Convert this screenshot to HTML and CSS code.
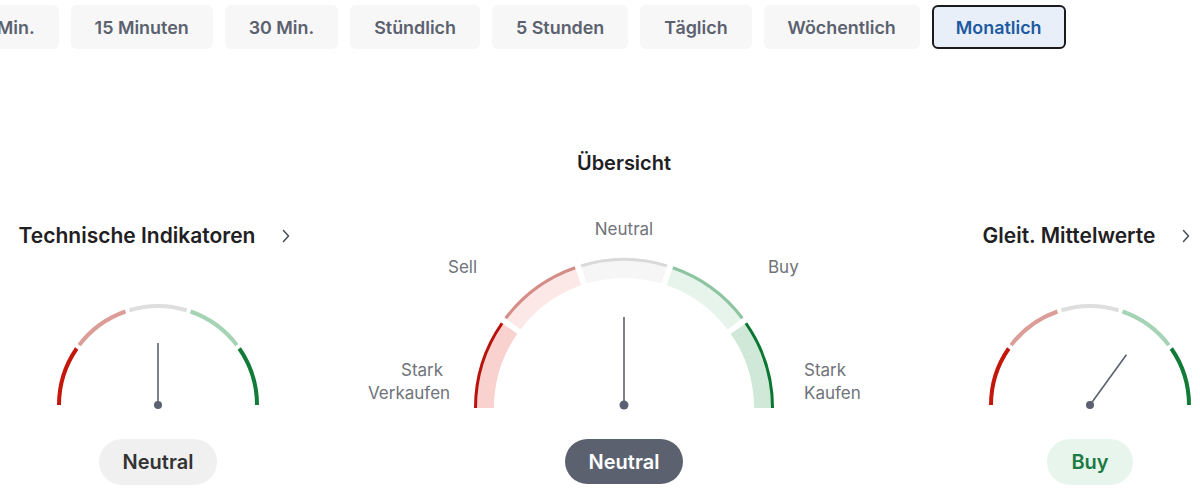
FILE: index.html
```html
<!DOCTYPE html>
<html lang="de">
<head>
    <meta charset="UTF-8">
    <meta name="viewport" content="width=device-width, initial-scale=1.0">
    <title>Technische Analyse</title>
    <link rel="stylesheet" href="styles.css">
</head>
<body>

<nav class="periods">
    <button class="period">5 Min.</button>
    <button class="period">15 Minuten</button>
    <button class="period">30 Min.</button>
    <button class="period">Stündlich</button>
    <button class="period">5 Stunden</button>
    <button class="period">Täglich</button>
    <button class="period">Wöchentlich</button>
    <button class="period active">Monatlich</button>
</nav>

<main class="summary">
    <section class="panel side">
        <div class="panel-head">
            <h2>Technische Indikatoren</h2>
            <svg class="chevron" width="8" height="14" viewBox="0 0 8 14"><path d="M1.5 1.5 L6.5 7 L1.5 12.5" /></svg>
        </div>
        <svg class="gauge-small" width="220" height="110" viewBox="0 0 220 110">
            <path class="s-ss" d="M11 104 A99 99 0 0 1 28.71 47.5" />
            <path class="s-s" d="M31.15 44.14 A99 99 0 0 1 77.44 10.5" />
            <path class="s-n" d="M81.39 9.23 A99 99 0 0 1 138.61 9.23" />
            <path class="s-b" d="M142.56 10.5 A99 99 0 0 1 188.85 44.14" />
            <path class="s-sb" d="M191.29 47.5 A99 99 0 0 1 209 104" />
            <line class="needle" x1="110" y1="104" x2="110" y2="42" />
            <circle class="hub" cx="110" cy="104" r="4" />
        </svg>
        <span class="pill pill-neutral">Neutral</span>
    </section>

    <section class="panel main">
        <h2>Übersicht</h2>
        <svg class="gauge-big" width="520" height="205" viewBox="0 0 520 205">
            <text x="260" y="25" text-anchor="middle">Neutral</text>
            <text x="84" y="63">Sell</text>
            <text x="404" y="63">Buy</text>
            <text x="37" y="166">Stark</text>
            <text x="4" y="189">Verkaufen</text>
            <text x="440" y="166">Stark</text>
            <text x="440" y="189">Kaufen</text>

            <path class="b-ss" d="M120 198 A140 140 0 0 1 145.05 118.1" />
            <path class="b-s" d="M148.49 113.36 A140 140 0 0 1 213.95 65.78" />
            <path class="b-n" d="M219.54 63.98 A140 140 0 0 1 300.46 63.98" />
            <path class="b-b" d="M306.05 65.78 A140 140 0 0 1 371.51 113.36" />
            <path class="b-sb" d="M374.95 118.1 A140 140 0 0 1 400 198" />

            <path class="l-ss" d="M111.5 198 A148.5 148.5 0 0 1 138.07 113.25" />
            <path class="l-s" d="M141.72 108.22 A148.5 148.5 0 0 1 211.16 57.76" />
            <path class="l-n" d="M217.08 55.84 A148.5 148.5 0 0 1 302.92 55.84" />
            <path class="l-b" d="M308.84 57.76 A148.5 148.5 0 0 1 378.28 108.22" />
            <path class="l-sb" d="M381.93 113.25 A148.5 148.5 0 0 1 408.5 198" />

            <line class="needle" x1="260" y1="195" x2="260" y2="107" />
            <circle class="hub" cx="260" cy="195" r="4.5" />
        </svg>
        <span class="pill pill-dark">Neutral</span>
    </section>

    <section class="panel side">
        <div class="panel-head">
            <h2>Gleit. Mittelwerte</h2>
            <svg class="chevron" width="8" height="14" viewBox="0 0 8 14"><path d="M1.5 1.5 L6.5 7 L1.5 12.5" /></svg>
        </div>
        <svg class="gauge-small" width="220" height="110" viewBox="0 0 220 110">
            <path class="s-ss" d="M11 104 A99 99 0 0 1 28.71 47.5" />
            <path class="s-s" d="M31.15 44.14 A99 99 0 0 1 77.44 10.5" />
            <path class="s-n" d="M81.39 9.23 A99 99 0 0 1 138.61 9.23" />
            <path class="s-b" d="M142.56 10.5 A99 99 0 0 1 188.85 44.14" />
            <path class="s-sb" d="M191.29 47.5 A99 99 0 0 1 209 104" />
            <line class="needle" x1="110" y1="104" x2="146.4" y2="53.8" />
            <circle class="hub" cx="110" cy="104" r="4" />
        </svg>
        <span class="pill pill-buy">Buy</span>
    </section>
</main>

</body>
</html>
```

FILE: styles.css
```css
body {
    margin: 0;
    background-color: #ffffff;
    font-family: 'Inter', 'Roboto', sans-serif;
    overflow: hidden;
}

.periods {
    display: flex;
    gap: 12px;
    margin-left: -43px;
    padding-top: 5px;
}

.period {
    flex: none;
    height: 44px;
    padding: 0 22px;
    border: 2px solid transparent;
    border-radius: 6px;
    background-color: #f7f7f8;
    color: #5b616e;
    font-family: inherit;
    font-size: 17.9px;
    font-weight: 600;
    cursor: pointer;
}

.period.active {
    background-color: #e8eff9;
    border-color: #1b1b1b;
    color: #1e5aa0;
}

.summary {
    display: grid;
    grid-template-columns: 276px 1fr 276px;
    width: 1208px;
    padding: 102px 0 0 20px;
}

.panel {
    display: flex;
    flex-direction: column;
    align-items: center;
}

.panel h2 {
    margin: 0;
    font-size: 20px;
    line-height: 24px;
    font-weight: 600;
    color: #1f2023;
    white-space: nowrap;
}

.side {
    padding-top: 73px;
}

.side h2 {
    font-size: 21px;
}

.panel-head {
    display: flex;
    align-items: center;
    gap: 27px;
    padding-right: 7px;
}

.chevron {
    flex: none;
}

.chevron path {
    fill: none;
    stroke: #4a4d55;
    stroke-width: 1.5;
    stroke-linecap: round;
    stroke-linejoin: round;
}

.gauge-small {
    display: block;
    margin-top: 53px;
}

.gauge-big {
    display: block;
    margin-top: 35px;
}

.gauge-small path,
.gauge-big path {
    fill: none;
}

.gauge-small path {
    stroke-width: 4;
}

.s-ss { stroke: #c4170c; }
.s-s { stroke: #dc9d98; }
.s-n { stroke: #dedede; }
.s-b { stroke: #a4d3b5; }
.s-sb { stroke: #137b38; }

.gauge-big path[class^="b-"] {
    stroke-width: 20;
}

.b-ss { stroke: #f9d2cf; }
.b-s { stroke: #fce9e7; }
.b-n { stroke: #f6f6f6; }
.b-b { stroke: #e7f4eb; }
.b-sb { stroke: #cfe8d7; }

.gauge-big path[class^="l-"] {
    stroke-width: 3;
}

.l-ss { stroke: #b8130a; }
.l-s { stroke: #d48d87; }
.l-n { stroke: #d9d9d9; }
.l-b { stroke: #8dc5a1; }
.l-sb { stroke: #0b7631; }

.gauge-big text {
    font-size: 17px;
    fill: #6f737a;
}

.needle {
    stroke: #5b6170;
    stroke-width: 1.6;
}

.hub {
    fill: #5b6170;
}

.pill {
    display: inline-flex;
    align-items: center;
    height: 46px;
    padding: 0 24px;
    border-radius: 23px;
    font-size: 20px;
    font-weight: 600;
}

.side .pill {
    margin-top: 28px;
}

.main .pill {
    margin-top: 24px;
    height: 45px;
}

.pill-neutral {
    background-color: #f0f0f0;
    color: #333333;
}

.pill-dark {
    background-color: #5c6170;
    color: #ffffff;
}

.pill-buy {
    background-color: #e8f5ec;
    color: #1c7a43;
}
```
